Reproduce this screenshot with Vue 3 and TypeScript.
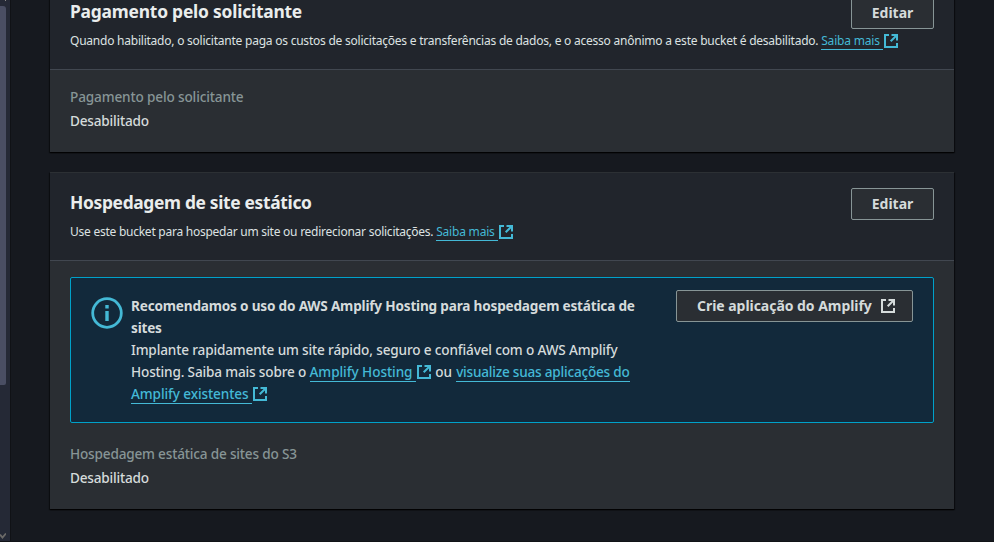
<script setup lang="ts">
import { defineComponent, h } from 'vue'

const ExternalIcon = defineComponent({
  setup() {
    return () =>
      h('svg', { width: 14, height: 14, viewBox: '0 0 14 14', fill: 'none', stroke: 'currentColor', 'stroke-width': 2 }, [
        h('path', { d: 'M5 1H1v12h12V9' }),
        h('path', { d: 'M7.5 1H13v5.5M13 1L6.7 7.3' }),
      ])
  },
})
</script>

<template>
  <div class="page">
    <div class="scrollbar">
      <span class="cap"></span>
      <span class="thumb"></span>
      <svg class="arrow" width="6" height="6" viewBox="0 0 6 6"><path d="M0 1.5L2.5 4.5L6 .5" fill="none" stroke="#6c6a68" stroke-width="1.8" /></svg>
    </div>
    <main class="content">
      <section class="card first">
        <header class="head">
          <div class="titles">
            <h2 class="t1">Pagamento pelo solicitante</h2>
            <p class="desc d1">Quando habilitado, o solicitante paga os custos de solicitações e transferências de dados, e o acesso anônimo a este bucket é desabilitado. <a class="link"><span class="u">Saiba mais&nbsp;</span><ExternalIcon class="ext" /></a></p>
          </div>
          <button class="btn edit">Editar</button>
        </header>
        <div class="body">
          <div class="label l1">Pagamento pelo solicitante</div>
          <div class="value">Desabilitado</div>
        </div>
      </section>
      <section class="card second">
        <header class="head">
          <div class="titles">
            <h2 class="t2">Hospedagem de site estático</h2>
            <p class="desc d2">Use este bucket para hospedar um site ou redirecionar solicitações. <a class="link"><span class="u">Saiba mais&nbsp;</span><ExternalIcon class="ext" /></a></p>
          </div>
          <button class="btn edit">Editar</button>
        </header>
        <div class="body">
          <div class="alert">
            <svg class="info" width="32" height="32" viewBox="0 0 32 32" fill="none" stroke="#44b9d6">
              <circle cx="16" cy="16" r="14.3" stroke-width="2.8" />
              <path d="M16 14v10M16 8v3.5" stroke-width="3.4" />
            </svg>
            <div class="message">
              <div class="line strong a1">Recomendamos o uso do AWS Amplify Hosting para hospedagem estática de</div>
              <div class="line strong a1">sites</div>
              <div class="line a3">Implante rapidamente um site rápido, seguro e confiável com o AWS Amplify</div>
              <div class="line a4">Hosting. Saiba mais sobre o <a class="link hosting"><span class="u">Amplify Hosting&nbsp;</span><ExternalIcon class="ext" /></a> ou <a class="link apps"><span class="u">visualize suas aplicações do</span></a></div>
              <div class="line a5"><a class="link"><span class="u">Amplify existentes&nbsp;</span><ExternalIcon class="ext" /></a></div>
            </div>
            <button class="btn create"><span>Crie aplicação do Amplify</span><ExternalIcon /></button>
          </div>
          <div class="label l2">Hospedagem estática de sites do S3</div>
          <div class="value">Desabilitado</div>
        </div>
      </section>
    </main>
  </div>
</template>

<style>
body { background: #16191f; overflow: hidden; }
</style>

<style scoped>
.page {
  display: flex;
  width: 994px;
  height: 542px;
  overflow: hidden;
  box-sizing: border-box;
  background: #16191f;
  color: #d5dbdb;
  font: 500 13.6px/22px "Noto Sans", "Open Sans", sans-serif;
  border-bottom: 1px solid #111317;
}
.scrollbar {
  width: 11px;
  height: 542px;
  flex: none;
  box-sizing: border-box;
  background: #252936;
  border-right: 1px solid #101216;
  display: flex;
  flex-direction: column;
}
.cap { width: 6px; height: 1px; border-right: 1px solid #8c8a88; box-sizing: border-box; }
.thumb { width: 6px; height: 379px; margin-top: 5px; background: #4a4e63; border-radius: 0 3px 2px 0; }
.arrow { margin-top: 148px; }
.content { margin-left: 39px; width: 904px; flex: none; }
.card {
  box-sizing: border-box;
  background: #2a2e33;
  box-shadow: 0 1px 1px 0 rgba(0, 0, 0, .65), 1px 1px 1px 0 rgba(0, 0, 0, .45), -1px 1px 1px 0 rgba(0, 0, 0, .4);
}
.first { height: 171px; margin-top: -19px; }
.second { height: 337px; margin-top: 20px; }
.head {
  height: 89px;
  box-sizing: border-box;
  display: flex;
  justify-content: space-between;
  padding: 15px 20px 0;
  background: #21252c;
  border-top: 1px solid #2c3034;
  border-bottom: 1px solid #414750;
}
.titles { flex: 1; min-width: 0; width: 0; }
h2 { margin: 0; font-size: 17.4px; line-height: 28px; font-weight: 700; color: #eaeded; white-space: nowrap; }
.t1 { letter-spacing: -.21px; }
.t2 { letter-spacing: -.33px; }
.desc { margin: 5px 0 0; font-size: 12px; font-weight: 400; line-height: 22px; white-space: nowrap; color: #dde2e2; }
.d1 { letter-spacing: -.232px; }
.d2 { letter-spacing: -.25px; }
.link { color: #44b9d6; }
.u { border-bottom: 1px solid #44b9d6; }
.ext { vertical-align: -2px; margin-left: 1px; }
.desc .link { letter-spacing: -.2px; }
.desc .ext { vertical-align: -3px; }
.btn {
  height: 32px;
  box-sizing: border-box;
  padding: 0;
  border: 1px solid #879596;
  border-radius: 2px;
  background: #2a2e33;
  color: #d5dbdb;
  font: 700 14px/20px "Noto Sans", "Open Sans", sans-serif;
  flex: none;
}
.edit { width: 83px; }
.body { padding: 16px 20px 0; }
.alert {
  display: flex;
  box-sizing: border-box;
  height: 146px;
  margin-bottom: 20px;
  padding: 12px 20px 0;
  border: 1px solid #00a1c9;
  border-radius: 2px;
  background: #12293b;
}
.info { margin-top: 7px; flex: none; }
.message { margin: 5px 0 0 8px; width: 545px; flex: none; }
.line { height: 22px; white-space: nowrap; }
.strong { font-weight: 700; }
.a1 { letter-spacing: -.195px; }
.a3 { letter-spacing: -.157px; }
.a4 { letter-spacing: -.17px; }
.hosting { letter-spacing: -.07px; margin-right: 1px; }
.apps { letter-spacing: -.22px; margin-left: 1px; }
.a5 { letter-spacing: -.11px; }
.create {
  width: 237px;
  display: flex;
  align-items: center;
  justify-content: flex-start;
  gap: 9px;
  padding-left: 20px;
  letter-spacing: -.04px;
}
.label { color: #879596; line-height: 22px; white-space: nowrap; }
.l1 { letter-spacing: -.15px; }
.l2 { letter-spacing: -.185px; }
.value { line-height: 22px; margin-top: 2px; letter-spacing: -.21px; }
</style>
